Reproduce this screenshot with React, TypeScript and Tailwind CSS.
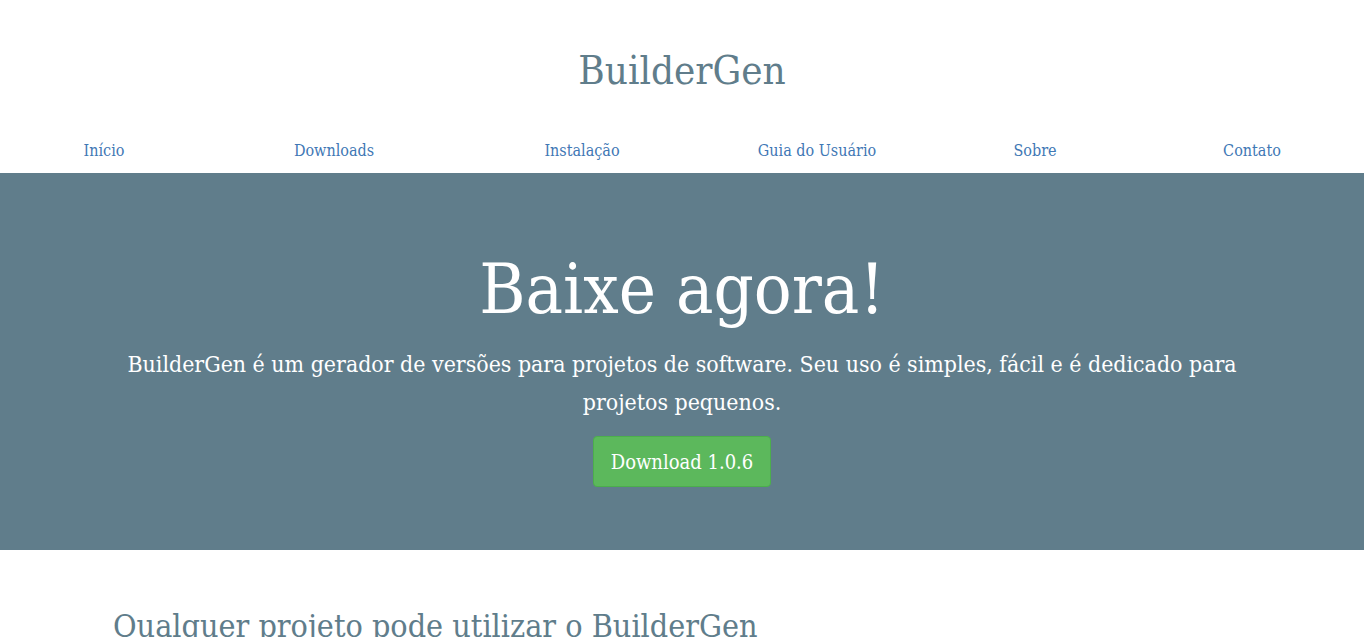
import React from "react";

const font = { fontFamily: '"DejaVu Serif Condensed", "DejaVu Serif", serif' };

const links = ["Início", "Downloads", "Instalação", "Guia do Usuário", "Sobre", "Contato"];

export default function App() {
  return (
    <div style={font} className="w-[1364px] h-[637px] overflow-hidden bg-white">
      <header className="bg-white">
        <div className="h-[130px] flex items-center justify-center pt-[10px]">
          <h1 className="text-[40px] leading-none text-[#607d8b]">BuilderGen</h1>
        </div>
        <nav className="grid grid-cols-[208px_252px_244px_226px_210px_224px] h-[43px] items-center">
          {links.map((l) => (
            <a key={l} href="#" className="text-center text-[16px] text-[#3f78b5] leading-none -mt-[1px]">
              {l}
            </a>
          ))}
        </nav>
      </header>
      <section className="bg-[#607d8b] h-[377px] flex flex-col items-center pt-[81px]">
        <h2 className="text-[70px] leading-none text-white">Baixe agora!</h2>
        <p className="mt-[21px] w-[1200px] text-center text-[22.9px] leading-[38px] text-white">
          BuilderGen é um gerador de versões para projetos de software. Seu uso é simples, fácil e é dedicado para projetos pequenos.
        </p>
        <a href="#" className="mt-[15px] h-[51px] px-[17px] flex items-center rounded-[4px] bg-[#5cb85c] border border-[#4cae4c] text-white text-[20px]">
          Download 1.0.6
        </a>
      </section>
      <section className="px-[113px] pt-[60px]">
        <h3 className="text-[32px] leading-none text-[#607d8b] whitespace-nowrap">Qualquer projeto pode utilizar o BuilderGen</h3>
      </section>
    </div>
  );
}
